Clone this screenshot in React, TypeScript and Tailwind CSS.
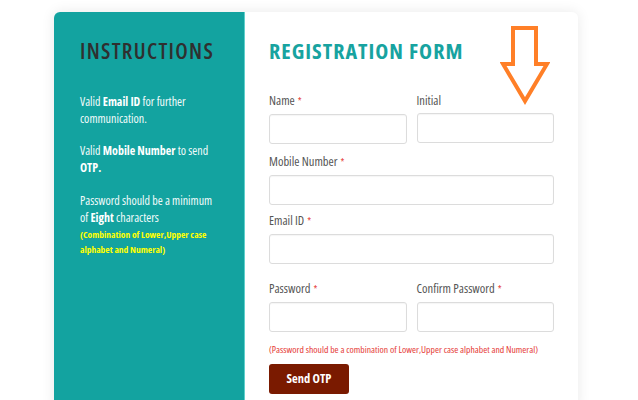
import React from "react";

function Label({ text, required = true }: { text: string; required?: boolean }) {
  return (
    <label className="block text-[12.5px] leading-[17px] text-[#555]">
      {text}
      {required && <span className="ml-[3px] text-[10px] text-[#e53935]">*</span>}
    </label>
  );
}

function Field() {
  return (
    <input
      type="text"
      className="block h-[30px] w-full rounded-[3px] border border-[#dcdcdc] bg-white px-2 shadow-[inset_0_1px_1px_rgba(0,0,0,0.04)] focus:outline-none"
    />
  );
}

export default function App() {
  return (
    <div className="min-h-[400px] overflow-hidden bg-white pl-[54px] pt-[12px] font-['Open_Sans','Liberation_Sans',sans-serif] [font-stretch:87.5%]">
      <div className="relative flex h-[400px] w-[524px] rounded-md bg-white shadow-[0_0_14px_rgba(0,0,0,0.09)]">
        {/* Left instructions panel */}
        <div className="w-[191px] shrink-0 rounded-l-md border-r border-[#5fd0cc] bg-[#13a3a0] pl-[26px] pr-[22px] pt-[23px]">
          <h2 className="text-[22px] font-semibold leading-[30px] tracking-[1.3px] text-[#2f2f2f]">
            INSTRUCTIONS
          </h2>
          <div className="mt-[28px] text-[12px] leading-[17px] text-[#f2fbfb]">
            <p className="mb-[15px]">
              Valid <b className="font-bold text-white">Email ID</b> for further communication.
            </p>
            <p className="mb-[16px]">
              Valid <b className="font-bold text-white">Mobile Number</b> to send{" "}
              <b className="font-bold text-white">OTP.</b>
            </p>
            <p>
              Password should be a minimum of <b className="font-bold text-white">Eight</b> characters
            </p>
            <p className="mt-[1px] text-[9.5px] font-bold leading-[15px] text-[#ffff00]">
              (Combination of Lower,Upper case alphabet and Numeral)
            </p>
          </div>
        </div>

        {/* Right form panel */}
        <div className="flex-1 pl-[24px] pr-[24px] pt-[23px]">
          <h2 className="text-[22px] font-bold leading-[30px] tracking-[1px] text-[#17a3a0]">
            REGISTRATION FORM
          </h2>

          <div className="mt-[27px] grid grid-cols-2 gap-x-[10px]">
            <div>
              <Label text="Name" />
              <div className="mt-[4px]">
                <Field />
              </div>
            </div>
            <div>
              <Label text="Initial" required={false} />
              <div className="mt-[4px]">
                <Field />
              </div>
            </div>
          </div>

          <div className="mt-[9px]">
            <Label text="Mobile Number" />
            <div className="mt-[4px]">
              <Field />
            </div>
          </div>

          <div className="mt-[7px]">
            <Label text="Email ID" />
            <div className="mt-[4px]">
              <Field />
            </div>
          </div>

          <div className="mt-[16px] grid grid-cols-2 gap-x-[10px]">
            <div>
              <Label text="Password" />
              <div className="mt-[4px]">
                <Field />
              </div>
            </div>
            <div>
              <Label text="Confirm Password" />
              <div className="mt-[4px]">
                <Field />
              </div>
            </div>
          </div>

          <p className="mt-[12px] whitespace-nowrap text-[9.7px] leading-[12px] text-[#e53935]">
            (Password should be a combination of Lower,Upper case alphabet and Numeral)
          </p>

          <button
            type="button"
            className="mt-[8px] h-[30px] w-[80px] rounded-[3px] bg-[#7a1a00] text-[12.5px] font-bold text-white"
          >
            Send OTP
          </button>
        </div>

        {/* Orange arrow overlay */}
        <svg
          className="absolute left-[446px] top-[13px]"
          width="50"
          height="80"
          viewBox="0 0 50 80"
          fill="none"
        >
          <polygon
            points="13,3 36,3 36,39 47,39 25,76 3,39 13,39"
            stroke="#ff7f27"
            strokeWidth="4"
            strokeLinejoin="miter"
          />
        </svg>
      </div>
    </div>
  );
}
